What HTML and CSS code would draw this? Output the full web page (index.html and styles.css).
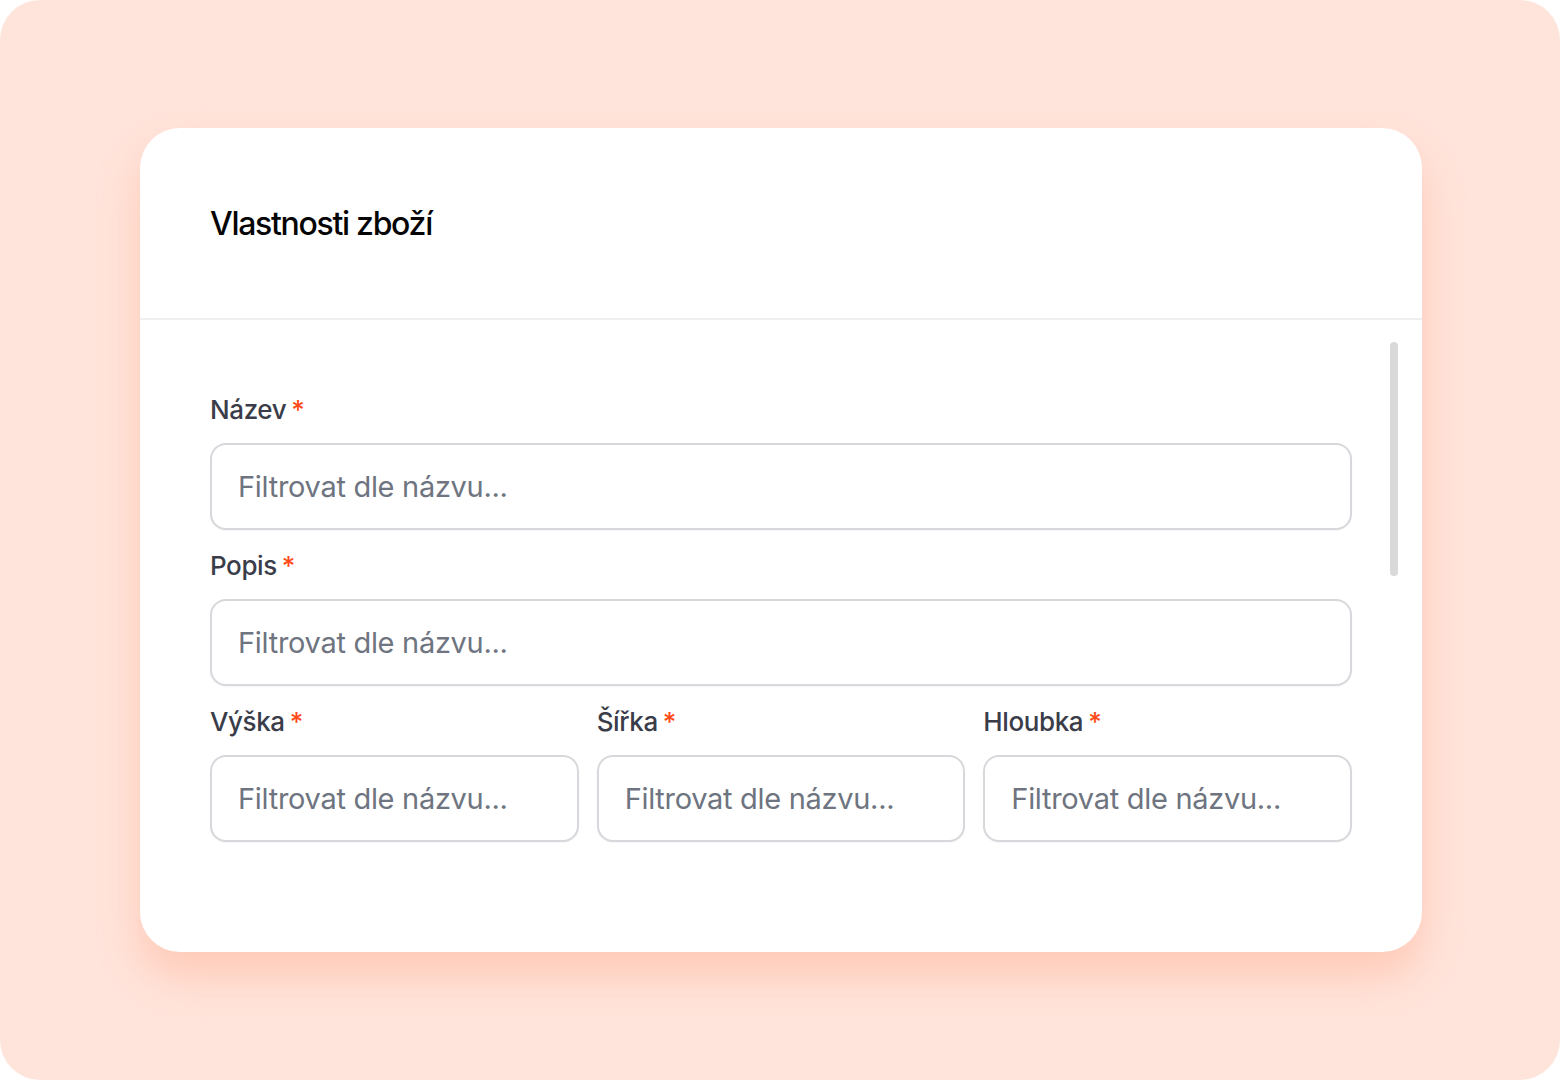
FILE: index.html
```html
<!DOCTYPE html>
<html lang="cs">
<head>
<meta charset="utf-8">
<title>Vlastnosti zboží</title>
<link rel="stylesheet" href="styles.css">
</head>
<body>
<div class="frame">
  <div class="card">
    <div class="card-header">
      <h1 class="title">Vlastnosti zboží</h1>
    </div>
    <div class="card-body">
      <div class="form">
        <div class="field">
          <label class="label">Název<span class="req">*</span></label>
          <input class="input" type="text" placeholder="Filtrovat dle názvu...">
        </div>
        <div class="field">
          <label class="label">Popis<span class="req">*</span></label>
          <input class="input" type="text" placeholder="Filtrovat dle názvu...">
        </div>
        <div class="row">
          <div class="field">
            <label class="label">Výška<span class="req">*</span></label>
            <input class="input" type="text" placeholder="Filtrovat dle názvu...">
          </div>
          <div class="field">
            <label class="label">Šířka<span class="req">*</span></label>
            <input class="input" type="text" placeholder="Filtrovat dle názvu...">
          </div>
          <div class="field">
            <label class="label">Hloubka<span class="req">*</span></label>
            <input class="input" type="text" placeholder="Filtrovat dle názvu...">
          </div>
        </div>
      </div>
      <div class="scrollbar"></div>
    </div>
  </div>
</div>
</body>
</html>
```

FILE: styles.css
```css
* { box-sizing: border-box; }
html, body { margin: 0; padding: 0; background: #ffffff; }
body { font-family: Inter, "Noto Sans", sans-serif; }

.frame {
  width: 1560px;
  height: 1080px;
  background: #ffe4db;
  border-radius: 40px;
  padding: 128px 138px 0 140px;
}

.card {
  width: 1282px;
  height: 824px;
  background: #ffffff;
  border-radius: 40px;
  box-shadow: 0 24px 40px rgba(255, 170, 140, 0.45);
  display: flex;
  flex-direction: column;
}

.card-header {
  height: 192px;
  border-bottom: 2px solid #efefef;
  padding: 72px 70px 0 70px;
}

.title {
  margin: 0;
  font-size: 32px;
  line-height: 48px;
  font-weight: 500;
  color: #050505;
  letter-spacing: -1.3px;
}

.card-body {
  position: relative;
  flex: 1;
  padding: 74px 70px 0 70px;
}

.form {
  display: flex;
  flex-direction: column;
  gap: 20px;
}

.row {
  display: grid;
  grid-template-columns: 1fr 1fr 1fr;
  gap: 18px;
}

.field {
  display: flex;
  flex-direction: column;
  gap: 17px;
}

.label {
  font-size: 26px;
  line-height: 32px;
  font-weight: 500;
  color: #3a3d49;
  letter-spacing: -0.4px;
}

.req {
  color: #ff4a17;
  margin-left: 5px;
}

.input {
  height: 87px;
  width: 100%;
  border: 2px solid #d7d7dc;
  border-radius: 16px;
  padding: 0 26px;
  font-family: Inter, "Noto Sans", sans-serif;
  font-size: 29px;
  color: #3a3d49;
  background: #fff;
  outline: none;
  box-shadow: 0 1px 2px rgba(0,0,0,0.04);
}

.input::placeholder {
  color: #6e7480;
  letter-spacing: -0.3px;
}

.scrollbar {
  position: absolute;
  top: 22px;
  left: 1250px;
  width: 8px;
  height: 234px;
  border-radius: 4px;
  background: #d9d9d9;
}
```
